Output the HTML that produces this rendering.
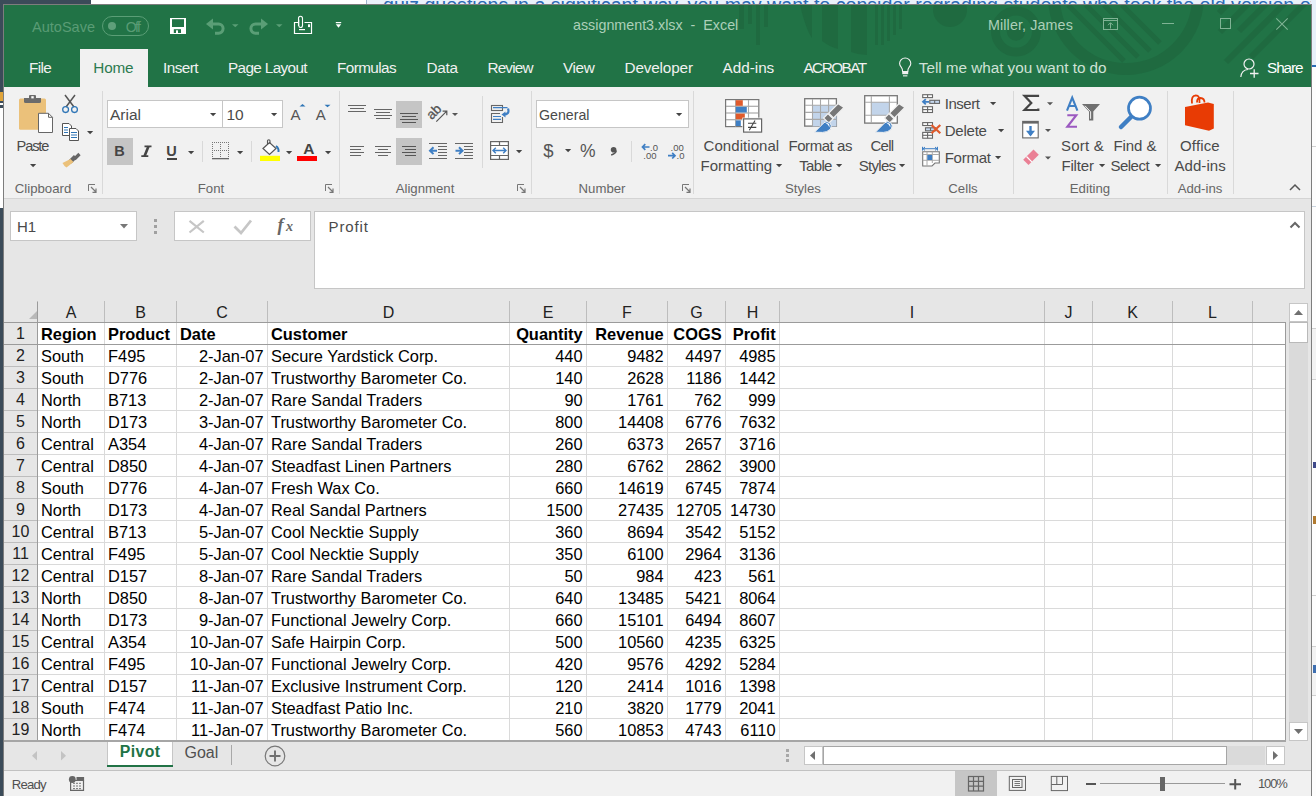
<!DOCTYPE html><html><head><meta charset="utf-8"><style>
*{margin:0;padding:0;box-sizing:border-box}
html,body{width:1316px;height:796px;overflow:hidden;background:#f0f0f0;font-family:"Liberation Sans",sans-serif}
.t{position:absolute;white-space:pre}
svg{overflow:visible}
</style></head><body>
<div style="position:absolute;left:0px;top:0px;width:1316px;height:796px;background:#eef2f7"></div>
<div style="position:absolute;left:0px;top:0px;width:91px;height:796px;background:#3b4b59"></div>
<div style="position:absolute;left:91px;top:0px;width:276px;height:5px;background:#ffffff"></div>
<div style="position:absolute;left:0px;top:92px;width:3px;height:9px;background:#e0a43a"></div>
<div style="position:absolute;left:0px;top:103px;width:3px;height:2px;background:#ffffff"></div>
<div style="position:absolute;left:0px;top:108px;width:3px;height:100px;background:#ffffff"></div>
<div style="position:absolute;left:367px;top:0px;width:949px;height:5px;background:#eaf1fa"></div>
<div style="position:absolute;left:366px;top:0px;width:1px;height:5px;background:#9fb4cc"></div>
<div style="position:absolute;left:367px;top:0;width:949px;height:5px;overflow:hidden"><div class="t" style="left:16px;top:-6px;font-size:19.6px;line-height:22px;color:#2c6bb5">quiz questions in a significant way, you may want to consider regrading students who took the old version of</div></div>
<div style="position:absolute;left:1311px;top:0px;width:5px;height:796px;background:#fdfdfd"></div>
<div style="position:absolute;left:1311px;top:0px;width:5px;height:65px;background:#e8f0fa"></div>
<div style="position:absolute;left:1311px;top:65px;width:5px;height:2px;background:#2c6bb5"></div>
<div style="position:absolute;left:1311px;top:146px;width:5px;height:1px;background:#d0d0d0"></div>
<div style="position:absolute;left:1311px;top:206px;width:5px;height:1px;background:#c9d3de"></div>
<div style="position:absolute;left:1311px;top:328px;width:5px;height:52px;background:#f3f3f3;border-top:1px solid #d0d0d0;border-bottom:1px solid #d0d0d0"></div>
<div style="position:absolute;left:1313px;top:462px;width:3px;height:6px;background:#404a8a"></div>
<div style="position:absolute;left:1313px;top:516px;width:3px;height:8px;background:#b07a30"></div>
<div style="position:absolute;left:1311px;top:595px;width:5px;height:1px;background:#d0d0d0"></div>
<div style="position:absolute;left:1311px;top:646px;width:5px;height:50px;background:#f3f3f3;border-top:1px solid #d0d0d0;border-bottom:1px solid #d0d0d0"></div>
<div style="position:absolute;left:1313px;top:665px;width:3px;height:8px;background:#3f6fb0"></div>
<div style="position:absolute;left:3px;top:4px;width:1309px;height:792px;background:#217346;border:1px solid #7d7d7d;border-bottom:none"></div>
<svg style="position:absolute;left:0;top:0" width="1312" height="87" viewBox="0 0 1312 87"><defs><clipPath id="tb"><rect x="4" y="5" width="1307" height="82"/></clipPath></defs><g clip-path="url(#tb)">
<g fill="#1f6a40">
<rect x="739" y="5" width="5" height="24"/>
<rect x="748" y="5" width="4" height="19"/>
<rect x="756" y="5" width="4" height="40"/>
<rect x="764" y="5" width="4" height="22"/>
<path d="M800 5 L812 5 L812 38 Q806 30 800 5Z"/>
<path d="M822 5 h16 v44 q-8 -2 -16 -8Z"/>
<path d="M851 5 h16 v50 q-8 0 -16 -3Z"/>
<rect x="875" y="5" width="3" height="40"/>
<rect x="881" y="5" width="3" height="40"/>
<rect x="887" y="5" width="3" height="36"/>
<rect x="893" y="5" width="3" height="30"/>
<rect x="899" y="5" width="3" height="24"/>
<circle cx="950" cy="10" r="17"/>
</g>
<g fill="none" stroke="#1f6a40">
<circle cx="1016" cy="31.6" r="20.5" stroke-width="9"/><circle cx="1016" cy="31.6" r="9.2" fill="#1f6a40" stroke="none"/>
<circle cx="1126" cy="-3" r="72" stroke-width="12"/>
<path d="M1068 5 L1124 61 M1086 5 L1138 57 M1104 5 L1150 51 M1122 5 L1160 43" stroke-width="5"/>
<path d="M1229 3 L1219 13 M1249 3 L1220 32 M1267 3 L1239 31 M1285 3 L1226 62 M1305 3 L1251 57" stroke-width="6"/>
</g></g></svg>
<div class="t " style="left:32.0px;top:18.64px;font-size:14.5px;line-height:16.67px;color:#5a9c75;letter-spacing:0.014px;">AutoSave</div>
<div style="position:absolute;left:102px;top:16px;width:47px;height:20px;border:1px solid #5a9e76;border-radius:10px"></div>
<div style="position:absolute;left:107.7px;top:21.8px;width:8.6px;height:8.6px;background:#5f9f7a;border-radius:50%"></div>
<div class="t " style="left:125.8px;top:19.10px;font-size:14px;line-height:16.10px;color:#5a9c75;letter-spacing:-1.600px;">Off</div>
<svg style="position:absolute;left:168px;top:16px;" width="20" height="20" viewBox="168 16 20 20"><rect x="170" y="18" width="16" height="16" fill="#fff"/><rect x="172" y="19.2" width="12" height="7.8" fill="#217346"/><rect x="173.8" y="29.2" width="7.2" height="3.8" fill="#217346"/><rect x="176" y="30.3" width="2" height="2.7" fill="#fff"/></svg>
<svg style="position:absolute;left:204px;top:16px;" width="40" height="20" viewBox="204 16 40 20"><path d="M206 24 L213 18.6 L213 29.4Z" fill="#5a9e76"/><path d="M212 24 H218.5 A4.6 4.6 0 0 1 218.5 33.2 H215" stroke="#5a9e76" stroke-width="3" fill="none"/><path d="M232 24.2 H238.5 L235.25 27.2Z" fill="#5a9e76"/></svg>
<svg style="position:absolute;left:248px;top:16px;" width="40" height="20" viewBox="248 16 40 20"><path d="M268 24 L261 18.6 L261 29.4Z" fill="#5a9e76"/><path d="M262 24 H255.5 A4.6 4.6 0 0 0 255.5 33.2 H259" stroke="#5a9e76" stroke-width="3" fill="none"/><path d="M276 24.2 H282.5 L279.25 27.2Z" fill="#5a9e76"/></svg>
<svg style="position:absolute;left:290px;top:14px;" width="26" height="22" viewBox="290 14 26 22"><path d="M298 22.5 H294.5 V33.5 H311.5 V22.5 H304.5" fill="none" stroke="#fff" stroke-width="1.2"/><path d="M298.5 26 V18.5 Q298.5 16.2 300.5 16.2 Q302.5 16.2 302.5 18.5 V25.5 Q302.5 27.5 300.5 27.5 Q298.8 27.5 298.8 25.5 V19.5" fill="none" stroke="#fff" stroke-width="1.1"/><rect x="299" y="29" width="6" height="1.2" fill="#fff"/><rect x="308" y="24.3" width="2" height="2.8" fill="#fff"/></svg>
<svg style="position:absolute;left:334px;top:20px;" width="10" height="10" viewBox="334 20 10 10"><rect x="335.8" y="22" width="5.4" height="1.2" fill="#fff"/><path d="M335.8 24.2 H341.2 L338.5 27.8Z" fill="#fff"/></svg>
<div class="t " style="left:573.0px;top:16.82px;font-size:14.3px;line-height:16.45px;color:#acd0b9;letter-spacing:-0.000px;">assignment3.xlsx  -  Excel</div>
<div class="t " style="left:988.0px;top:16.82px;font-size:14.3px;line-height:16.45px;color:#acd0b9;letter-spacing:0.117px;">Miller, James</div>
<svg style="position:absolute;left:1103px;top:18px;" width="15" height="12" viewBox="0 0 15 12"><rect x="0.5" y="0.5" width="14" height="11" fill="none" stroke="#7fb394" stroke-width="1"/><path d="M1 2.5 H14" stroke="#7fb394"/><path d="M7.5 10.5 V5 M5 7.2 L7.5 4.7 L10 7.2" fill="none" stroke="#7fb394"/></svg>
<div style="position:absolute;left:1162px;top:23px;width:12px;height:1px;background:#7fb394"></div>
<div style="position:absolute;left:1219.5px;top:18px;width:11px;height:11px;border:1px solid #7fb394"></div>
<svg style="position:absolute;left:1276px;top:18px;" width="12" height="12" viewBox="0 0 12 12"><path d="M0.3 0.3 L11.7 11.7 M11.7 0.3 L0.3 11.7" stroke="#7fb394" stroke-width="1.1"/></svg>
<div style="position:absolute;left:80px;top:49px;width:68px;height:38px;background:#f1f1f1"></div>
<div class="t " style="left:29.0px;top:58.90px;font-size:15.3px;line-height:17.59px;color:#f1f1f1;letter-spacing:-0.667px;">File</div>
<div class="t " style="left:93.3px;top:58.90px;font-size:15.3px;line-height:17.59px;color:#2d7b50;letter-spacing:-0.200px;">Home</div>
<div class="t " style="left:163.0px;top:58.90px;font-size:15.3px;line-height:17.59px;color:#f1f1f1;letter-spacing:-0.560px;">Insert</div>
<div class="t " style="left:228.0px;top:58.90px;font-size:15.3px;line-height:17.59px;color:#f1f1f1;letter-spacing:-0.630px;">Page Layout</div>
<div class="t " style="left:337.0px;top:58.90px;font-size:15.3px;line-height:17.59px;color:#f1f1f1;letter-spacing:-0.586px;">Formulas</div>
<div class="t " style="left:426.4px;top:58.90px;font-size:15.3px;line-height:17.59px;color:#f1f1f1;letter-spacing:-0.267px;">Data</div>
<div class="t " style="left:487.4px;top:58.90px;font-size:15.3px;line-height:17.59px;color:#f1f1f1;letter-spacing:-0.800px;">Review</div>
<div class="t " style="left:563.0px;top:58.90px;font-size:15.3px;line-height:17.59px;color:#f1f1f1;letter-spacing:-0.400px;">View</div>
<div class="t " style="left:624.5px;top:58.90px;font-size:15.3px;line-height:17.59px;color:#f1f1f1;letter-spacing:-0.150px;">Developer</div>
<div class="t " style="left:722.5px;top:58.90px;font-size:15.3px;line-height:17.59px;color:#f1f1f1;letter-spacing:-0.017px;">Add-ins</div>
<div class="t " style="left:803.4px;top:58.90px;font-size:15.3px;line-height:17.59px;color:#f1f1f1;letter-spacing:-1.500px;">ACROBAT</div>
<svg style="position:absolute;left:896px;top:55px;" width="20" height="24" viewBox="896 55 20 24"><path d="M902.6 71.5 Q902.6 69 901.2 67.2 Q899.6 65.2 899.6 63.6 A5.6 5.6 0 0 1 910.8 63.6 Q910.8 65.2 909.2 67.2 Q907.8 69 907.8 71.5Z" fill="none" stroke="#f1f1f1" stroke-width="1.1"/><rect x="902.2" y="71.4" width="6" height="2.8" fill="#f1f1f1"/><rect x="903" y="75.3" width="4.4" height="1.1" fill="#f1f1f1"/></svg>
<div class="t " style="left:918.8px;top:58.90px;font-size:15.3px;line-height:17.59px;color:#cfe2d6;letter-spacing:-0.038px;">Tell me what you want to do</div>
<svg style="position:absolute;left:1240px;top:58px;" width="19" height="20" viewBox="0 0 19 20"><circle cx="9" cy="6" r="5" fill="none" stroke="#f1f1f1" stroke-width="1.2"/><path d="M0.8 19 Q1.5 12 8 11.5" fill="none" stroke="#f1f1f1" stroke-width="1.2"/><path d="M10 15.5 H18.5 M14.2 11.3 V19.8" stroke="#f1f1f1" stroke-width="1.3"/></svg>
<div class="t " style="left:1267.0px;top:58.90px;font-size:15.3px;line-height:17.59px;color:#ffffff;letter-spacing:-1.075px;">Share</div>
<div style="position:absolute;left:4px;top:87px;width:1307px;height:111px;background:#f1f1f1"></div>
<div style="position:absolute;left:4px;top:198px;width:1307px;height:1px;background:#d4d4d4"></div>
<div style="position:absolute;left:4px;top:199px;width:1307px;height:597px;background:#e6e6e6"></div>
<svg style="position:absolute;left:14px;top:92px;" width="44" height="44" viewBox="14 92 44 44"><rect x="19" y="98.5" width="27" height="31.2" rx="1.5" fill="#ebc17a"/>
<path d="M24 98 H41 V101.5 Q41 103 39.5 103 H25.5 Q24 103 24 101.5Z" fill="#6b6b6b"/><rect x="29" y="95" width="7" height="4" rx="1" fill="#6b6b6b"/><rect x="31.3" y="96.2" width="2.4" height="2.2" fill="#fff"/>
<path d="M38.5 113.3 H48.5 L52.5 117.3 V132.5 H38.5Z" fill="#fff" stroke="#666" stroke-width="1"/><path d="M48.5 113.3 V117.3 H52.5" fill="none" stroke="#666" stroke-width="1"/></svg>
<div class="t " style="left:16.6px;top:137.55px;font-size:14.6px;line-height:16.79px;color:#4a4a4a;letter-spacing:-1.125px;">Paste</div>
<svg style="position:absolute;left:29.5px;top:163.5px;" width="7" height="4" viewBox="0 0 7 4"><path d="M0 0 H6.2 L3.1 3.3Z" fill="#444"/></svg>
<svg style="position:absolute;left:60px;top:92px;" width="20" height="24" viewBox="60 92 20 24"><path d="M65 95 L74 107 M75 95 L66 107" stroke="#555" stroke-width="1.5"/><circle cx="65.6" cy="109.6" r="2.9" fill="none" stroke="#2e75b6" stroke-width="1.3"/><circle cx="74.5" cy="109.6" r="2.9" fill="none" stroke="#2e75b6" stroke-width="1.3"/></svg>
<svg style="position:absolute;left:60px;top:120px;" width="22" height="24" viewBox="60 120 22 24"><path d="M62.5 123.5 H69 L71.5 126 V135.5 H62.5Z" fill="#fff" stroke="#555" stroke-width="1"/><path d="M64 127.5 H68 M64 130 H68 M64 132.5 H68" stroke="#2e75b6" stroke-width="1"/><path d="M69.5 128.5 H76 L78.5 131 V140.5 H69.5Z" fill="#fff" stroke="#555" stroke-width="1"/><path d="M71 132.5 H77 M71 135 H77 M71 137.5 H77" stroke="#2e75b6" stroke-width="1"/></svg>
<svg style="position:absolute;left:87px;top:130.7px;" width="7" height="4" viewBox="0 0 7 4"><path d="M0 0 H6.2 L3.1 3.3Z" fill="#444"/></svg>
<svg style="position:absolute;left:60px;top:150px;" width="22" height="20" viewBox="60 150 22 20"><path d="M79.5 154 L74.5 159" stroke="#666" stroke-width="3.2"/><path d="M75.5 156.5 L70 162" stroke="#666" stroke-width="4.5"/><path d="M70.5 159 L62.5 163 Q64 166 66.5 167.5 L73.5 162Z" fill="#ebc17a"/></svg>
<div class="t " style="left:-157px;width:400px;text-align:center;top:180.84px;font-size:13.2px;line-height:15.18px;color:#666666;">Clipboard</div>
<svg style="position:absolute;left:88px;top:184px;" width="9" height="9" viewBox="0 0 9 9"><path d="M0.5 7 V0.5 H7" fill="none" stroke="#777" stroke-width="1"/><path d="M3 3 L8 8 M8 4.5 V8.3 H4.5" fill="none" stroke="#777" stroke-width="1.2"/></svg>
<div style="position:absolute;left:102px;top:91px;width:1px;height:103px;background:#d9d9d9"></div>
<div style="position:absolute;left:107px;top:100px;width:116px;height:28px;background:#fff;border:1px solid #c6c6c6"></div>
<div style="position:absolute;left:222px;top:100px;width:61px;height:28px;background:#fff;border:1px solid #c6c6c6"></div>
<div class="t " style="left:110px;top:105.72px;font-size:15.5px;line-height:17.82px;color:#4a4a4a;">Arial</div>
<div class="t " style="left:226.5px;top:105.72px;font-size:15.5px;line-height:17.82px;color:#4a4a4a;">10</div>
<svg style="position:absolute;left:210px;top:113px;" width="7" height="4" viewBox="0 0 7 4"><path d="M0 0 H6.2 L3.1 3.3Z" fill="#444"/></svg>
<svg style="position:absolute;left:271px;top:113px;" width="7" height="4" viewBox="0 0 7 4"><path d="M0 0 H6.2 L3.1 3.3Z" fill="#444"/></svg>
<div class="t " style="left:290.5px;top:105.68px;font-size:15px;line-height:17.25px;color:#555;">A</div>
<svg style="position:absolute;left:298px;top:103px;" width="8" height="5" viewBox="298 103 8 5"><path d="M299.5 106.6 L302.5 104 L305.5 106.6Z" fill="#2e75b6"/></svg>
<div class="t " style="left:315.8px;top:105.68px;font-size:15px;line-height:17.25px;color:#555;">A</div>
<svg style="position:absolute;left:322px;top:103px;" width="10" height="5" viewBox="322 103 10 5"><path d="M324.5 104.8 L330.5 104.8 L327.5 107.2Z" fill="#2e75b6"/></svg>
<div style="position:absolute;left:107px;top:138px;width:26px;height:27px;background:#c5c5c5"></div>
<div class="t " style="left:114.3px;top:143.34px;font-size:14.5px;line-height:16.67px;color:#444;font-weight:bold;">B</div>
<svg style="position:absolute;left:138px;top:142px;" width="16" height="18" viewBox="138 142 16 18"><path d="M144.5 146.3 H151.5 M141.3 156.2 H148.3" stroke="#444" stroke-width="1.8"/><path d="M148.5 146.3 L144.5 156.2" stroke="#444" stroke-width="2.6"/></svg>
<div class="t " style="left:166.3px;top:143.14px;font-size:14.5px;line-height:16.67px;color:#444;font-weight:bold;">U</div>
<div style="position:absolute;left:166.5px;top:158px;width:10.5px;height:1.5px;background:#444"></div>
<svg style="position:absolute;left:188px;top:150.5px;" width="7" height="4" viewBox="0 0 7 4"><path d="M0 0 H6.2 L3.1 3.3Z" fill="#444"/></svg>
<div style="position:absolute;left:202px;top:141px;width:1px;height:21px;background:#d9d9d9"></div>
<svg style="position:absolute;left:210px;top:140px;" width="22" height="22" viewBox="210 140 22 22"><rect x="212" y="142" width="1" height="1" fill="#777"/><rect x="212" y="150" width="1" height="1" fill="#777"/><rect x="214" y="142" width="1" height="1" fill="#777"/><rect x="214" y="150" width="1" height="1" fill="#777"/><rect x="216" y="142" width="1" height="1" fill="#777"/><rect x="216" y="150" width="1" height="1" fill="#777"/><rect x="218" y="142" width="1" height="1" fill="#777"/><rect x="218" y="150" width="1" height="1" fill="#777"/><rect x="220" y="142" width="1" height="1" fill="#777"/><rect x="220" y="150" width="1" height="1" fill="#777"/><rect x="222" y="142" width="1" height="1" fill="#777"/><rect x="222" y="150" width="1" height="1" fill="#777"/><rect x="224" y="142" width="1" height="1" fill="#777"/><rect x="224" y="150" width="1" height="1" fill="#777"/><rect x="226" y="142" width="1" height="1" fill="#777"/><rect x="226" y="150" width="1" height="1" fill="#777"/><rect x="228" y="142" width="1" height="1" fill="#777"/><rect x="228" y="150" width="1" height="1" fill="#777"/><rect x="212" y="142" width="1" height="1" fill="#777"/><rect x="212" y="144" width="1" height="1" fill="#777"/><rect x="212" y="146" width="1" height="1" fill="#777"/><rect x="212" y="148" width="1" height="1" fill="#777"/><rect x="212" y="150" width="1" height="1" fill="#777"/><rect x="212" y="152" width="1" height="1" fill="#777"/><rect x="212" y="154" width="1" height="1" fill="#777"/><rect x="212" y="156" width="1" height="1" fill="#777"/><rect x="220" y="142" width="1" height="1" fill="#777"/><rect x="220" y="144" width="1" height="1" fill="#777"/><rect x="220" y="146" width="1" height="1" fill="#777"/><rect x="220" y="148" width="1" height="1" fill="#777"/><rect x="220" y="150" width="1" height="1" fill="#777"/><rect x="220" y="152" width="1" height="1" fill="#777"/><rect x="220" y="154" width="1" height="1" fill="#777"/><rect x="220" y="156" width="1" height="1" fill="#777"/><rect x="228" y="142" width="1" height="1" fill="#777"/><rect x="228" y="144" width="1" height="1" fill="#777"/><rect x="228" y="146" width="1" height="1" fill="#777"/><rect x="228" y="148" width="1" height="1" fill="#777"/><rect x="228" y="150" width="1" height="1" fill="#777"/><rect x="228" y="152" width="1" height="1" fill="#777"/><rect x="228" y="154" width="1" height="1" fill="#777"/><rect x="228" y="156" width="1" height="1" fill="#777"/><rect x="212" y="158" width="17" height="1.3" fill="#666"/></svg>
<svg style="position:absolute;left:237px;top:150.5px;" width="7" height="4" viewBox="0 0 7 4"><path d="M0 0 H6.2 L3.1 3.3Z" fill="#444"/></svg>
<div style="position:absolute;left:251px;top:141px;width:1px;height:21px;background:#d9d9d9"></div>
<svg style="position:absolute;left:258px;top:138px;" width="26" height="26" viewBox="258 138 26 26"><path d="M263 148.5 L269.5 142.5 L276 148.5 L269.5 154.5Z" fill="#fff" stroke="#555" stroke-width="1.2"/><path d="M267.5 144.5 V140.8 Q267.5 139.8 268.8 139.8 Q270 139.8 270 140.8 V144" fill="none" stroke="#555" stroke-width="1.1"/><path d="M276 146 Q279 148 278.5 152" fill="none" stroke="#2e75b6" stroke-width="2"/><rect x="260" y="155.8" width="20" height="5.2" fill="#ffff00"/></svg>
<svg style="position:absolute;left:286px;top:150.5px;" width="7" height="4" viewBox="0 0 7 4"><path d="M0 0 H6.2 L3.1 3.3Z" fill="#444"/></svg>
<div class="t " style="left:108.80000000000001px;width:400px;text-align:center;top:139.72px;font-size:15.5px;line-height:17.82px;color:#444;font-weight:bold;">A</div>
<div style="position:absolute;left:297px;top:155.8px;width:20px;height:5.2px;background:#ff0000"></div>
<svg style="position:absolute;left:325px;top:150.5px;" width="7" height="4" viewBox="0 0 7 4"><path d="M0 0 H6.2 L3.1 3.3Z" fill="#444"/></svg>
<div class="t " style="left:11px;width:400px;text-align:center;top:180.84px;font-size:13.2px;line-height:15.18px;color:#666666;">Font</div>
<svg style="position:absolute;left:325px;top:184px;" width="9" height="9" viewBox="0 0 9 9"><path d="M0.5 7 V0.5 H7" fill="none" stroke="#777" stroke-width="1"/><path d="M3 3 L8 8 M8 4.5 V8.3 H4.5" fill="none" stroke="#777" stroke-width="1.2"/></svg>
<div style="position:absolute;left:339px;top:91px;width:1px;height:103px;background:#d9d9d9"></div>
<svg style="position:absolute;left:340px;top:96px;" width="140" height="72" viewBox="340 96 140 72"><rect x="348" y="105" width="18" height="1" fill="#666"/><rect x="350" y="108" width="14" height="1" fill="#666"/><rect x="348" y="111" width="18" height="1" fill="#666"/><rect x="374" y="109" width="18" height="1" fill="#666"/><rect x="376" y="112" width="14" height="1" fill="#666"/><rect x="374" y="115" width="18" height="1" fill="#666"/><rect x="376" y="118" width="14" height="1" fill="#666"/><rect x="396" y="101" width="26" height="27" fill="#c5c5c5"/><rect x="400" y="113" width="18" height="1" fill="#555"/><rect x="402" y="116" width="14" height="1" fill="#555"/><rect x="400" y="119" width="18" height="1" fill="#555"/><rect x="402" y="122" width="14" height="1" fill="#555"/><text x="0" y="0" font-size="13.5" font-family="Liberation Sans" fill="#555" stroke="#555" stroke-width="0.3" transform="translate(431.8,120.3) rotate(-45)">ab</text><path d="M436.3 121.6 L446.5 111.4 M442.6 111.2 H446.8 V115.2" fill="none" stroke="#555" stroke-width="1.2"/><path d="M452 113 H458 L455 116Z" fill="#555"/><rect x="350" y="146" width="14" height="1" fill="#666"/><rect x="350" y="149" width="11" height="1" fill="#666"/><rect x="350" y="152" width="14" height="1" fill="#666"/><rect x="350" y="155" width="11" height="1" fill="#666"/><rect x="375" y="146" width="16" height="1" fill="#666"/><rect x="378" y="149" width="10" height="1" fill="#666"/><rect x="375" y="152" width="16" height="1" fill="#666"/><rect x="378" y="155" width="10" height="1" fill="#666"/><rect x="396" y="138" width="26" height="27" fill="#c5c5c5"/><rect x="402" y="146" width="14" height="1" fill="#555"/><rect x="405" y="149" width="11" height="1" fill="#555"/><rect x="402" y="152" width="14" height="1" fill="#555"/><rect x="405" y="155" width="11" height="1" fill="#555"/><rect x="429" y="143" width="18" height="1" fill="#666"/><rect x="438" y="146" width="9" height="1" fill="#666"/><rect x="438" y="149" width="9" height="1" fill="#666"/><rect x="438" y="152" width="9" height="1" fill="#666"/><rect x="438" y="155" width="9" height="1" fill="#666"/><rect x="429" y="158" width="18" height="1" fill="#666"/><path d="M433.5 147.3 L430 150.7 L433.5 154.1 M430.5 150.7 H437" fill="none" stroke="#3f7fc4" stroke-width="2"/><rect x="455" y="143" width="18" height="1" fill="#666"/><rect x="464" y="146" width="9" height="1" fill="#666"/><rect x="464" y="149" width="9" height="1" fill="#666"/><rect x="464" y="152" width="9" height="1" fill="#666"/><rect x="464" y="155" width="9" height="1" fill="#666"/><rect x="455" y="158" width="18" height="1" fill="#666"/><path d="M459 147.3 L462.5 150.7 L459 154.1 M462 150.7 H455.5" fill="none" stroke="#3f7fc4" stroke-width="2"/></svg>
<div style="position:absolute;left:482px;top:96px;width:1px;height:72px;background:#d9d9d9"></div>
<svg style="position:absolute;left:486px;top:100px;" width="28" height="28" viewBox="486 100 28 28"><rect x="491.5" y="105.5" width="11" height="5" fill="none" stroke="#666" stroke-width="1.1"/><path d="M500 113.5 H491.5 V122.5 H502.5 V117" fill="none" stroke="#666" stroke-width="1.1"/><path d="M493 107.6 H507.5 M493 116.5 H501 M493 119.4 H501" stroke="#3f7fc4" stroke-width="1.1"/><path d="M508 108.5 Q510 114.5 503.5 114.5" fill="none" stroke="#3f7fc4" stroke-width="2.2"/><path d="M501.5 114.5 L505.5 111.5 V117.5Z" fill="#3f7fc4"/></svg>
<svg style="position:absolute;left:486px;top:138px;" width="28" height="24" viewBox="486 138 28 24"><rect x="490.6" y="141.6" width="17.8" height="17.8" fill="#fff" stroke="#666" stroke-width="1.2"/><path d="M490.6 145.5 H508.4 M490.6 155.5 H508.4 M499.5 141.6 V145.5 M499.5 155.5 V159.4" stroke="#666" stroke-width="1.2"/><path d="M493 150.5 H506 M495.8 147.7 L493 150.5 L495.8 153.3 M503.2 147.7 L506 150.5 L503.2 153.3" fill="none" stroke="#3f7fc4" stroke-width="1.4"/></svg>
<svg style="position:absolute;left:516px;top:149.8px;" width="7" height="4" viewBox="0 0 7 4"><path d="M0 0 H6.2 L3.1 3.3Z" fill="#444"/></svg>
<div class="t " style="left:225px;width:400px;text-align:center;top:180.84px;font-size:13.2px;line-height:15.18px;color:#666666;">Alignment</div>
<svg style="position:absolute;left:517px;top:184px;" width="9" height="9" viewBox="0 0 9 9"><path d="M0.5 7 V0.5 H7" fill="none" stroke="#777" stroke-width="1"/><path d="M3 3 L8 8 M8 4.5 V8.3 H4.5" fill="none" stroke="#777" stroke-width="1.2"/></svg>
<div style="position:absolute;left:531px;top:91px;width:1px;height:103px;background:#d9d9d9"></div>
<div style="position:absolute;left:536px;top:100px;width:153px;height:28px;background:#fff;border:1px solid #c6c6c6"></div>
<div class="t " style="left:539px;top:106.91px;font-size:14.2px;line-height:16.33px;color:#4a4a4a;">General</div>
<svg style="position:absolute;left:676px;top:113px;" width="7" height="4" viewBox="0 0 7 4"><path d="M0 0 H6.2 L3.1 3.3Z" fill="#444"/></svg>
<div class="t " style="left:543.2px;top:139.95px;font-size:18.5px;line-height:21.27px;color:#555;">$</div>
<svg style="position:absolute;left:565px;top:149.3px;" width="7" height="4" viewBox="0 0 7 4"><path d="M0 0 H6.2 L3.1 3.3Z" fill="#444"/></svg>
<div class="t " style="left:580px;top:141.47px;font-size:17.5px;line-height:20.12px;color:#555;">%</div>
<svg style="position:absolute;left:606px;top:144px;" width="14" height="14" viewBox="606 144 14 14"><circle cx="613.6" cy="149.8" r="2.8" fill="#555"/><path d="M616.2 150.5 Q616 153.5 611.2 155" fill="none" stroke="#555" stroke-width="1.6"/></svg>
<div style="position:absolute;left:631px;top:141px;width:1px;height:21px;background:#d9d9d9"></div>
<svg style="position:absolute;left:638px;top:140px;" width="50" height="22" viewBox="638 140 50 22"><text x="650" y="150.8" font-size="9.5" font-family="Liberation Sans" fill="#555">.0</text><text x="643.3" y="159.4" font-size="9.5" font-family="Liberation Sans" fill="#555">.00</text><path d="M642.5 147 H649.5 M645.3 144.2 L642.5 147 L645.3 149.8" stroke="#3f7fc4" stroke-width="1.7" fill="none"/><text x="670.5" y="150.8" font-size="9.5" font-family="Liberation Sans" fill="#555">.00</text><text x="676.5" y="159.4" font-size="9.5" font-family="Liberation Sans" fill="#555">.0</text><path d="M668 155.7 H675 M672.2 152.9 L675 155.7 L672.2 158.5" stroke="#3f7fc4" stroke-width="1.7" fill="none"/></svg>
<div class="t " style="left:402px;width:400px;text-align:center;top:180.84px;font-size:13.2px;line-height:15.18px;color:#666666;">Number</div>
<svg style="position:absolute;left:682px;top:184px;" width="9" height="9" viewBox="0 0 9 9"><path d="M0.5 7 V0.5 H7" fill="none" stroke="#777" stroke-width="1"/><path d="M3 3 L8 8 M8 4.5 V8.3 H4.5" fill="none" stroke="#777" stroke-width="1.2"/></svg>
<div style="position:absolute;left:693px;top:91px;width:1px;height:103px;background:#d9d9d9"></div>
<svg style="position:absolute;left:720px;top:94px;" width="46" height="42" viewBox="720 94 46 42"><rect x="725.6" y="99.6" width="33.2" height="27" fill="#fff" stroke="#777" stroke-width="1.2"/><path d="M726 106.3 H758.5 M726 113 H758.5 M726 119.8 H758.5" stroke="#999" stroke-width="1.1"/><path d="M735.6 100 V126.4 M748.5 100 V126.4" stroke="#aaa" stroke-width="1.1"/><rect x="735.8" y="100.2" width="7" height="5.6" fill="#e05a2b"/><rect x="735.8" y="106.9" width="11" height="5.6" fill="#3f7fc4"/><rect x="735.8" y="113.6" width="9" height="5.6" fill="#e05a2b"/><rect x="735.8" y="120.4" width="5" height="5.6" fill="#3f7fc4"/><rect x="742.3" y="117.6" width="20.6" height="15.6" fill="#f1f1f1"/><rect x="743.6" y="118.9" width="18" height="13.2" fill="#fff" stroke="#666" stroke-width="1.2"/><path d="M748 123.3 H756.3 M748 127.4 H756.3 M755 120.5 L749.3 130.3" stroke="#444" stroke-width="1.1"/></svg>
<div class="t " style="left:703.6px;top:137.18px;font-size:15px;line-height:17.25px;color:#4a4a4a;letter-spacing:0.050px;">Conditional</div>
<div class="t " style="left:700.5px;top:157.18px;font-size:15px;line-height:17.25px;color:#4a4a4a;letter-spacing:0.000px;">Formatting</div>
<svg style="position:absolute;left:776px;top:164px;" width="7" height="4" viewBox="0 0 7 4"><path d="M0 0 H6.2 L3.1 3.3Z" fill="#444"/></svg>
<svg style="position:absolute;left:800px;top:94px;" width="50" height="42" viewBox="800 94 50 42"><rect x="804.7" y="98.7" width="31.7" height="27.4" fill="#fff" stroke="#777" stroke-width="1.3"/><rect x="812.5" y="105.3" width="24" height="21" fill="#c2d4ea"/><path d="M812.5 99 V126 M820.5 99 V126 M828.6 99 V126 M805 105.3 H836 M805 112.4 H836 M805 119.4 H836" stroke="#a8a8a8" stroke-width="1.1"/><g transform="translate(814.5,132.2)"><g transform="rotate(-45)"><rect x="16.5" y="-3.6" width="6.2" height="7.2" fill="#777" stroke="#f1f1f1" stroke-width="1.2"/><path d="M23.5 -3.4 H37 L38.3 3.4 H23.5Z" fill="#777" stroke="#f1f1f1" stroke-width="1.2"/></g><path d="M0 0 L9.5 -9.5 Q12.5 -11.8 15.5 -9.3 Q18 -6.5 15.8 -3 Q12.5 0.2 8 0.2 Z" fill="#3f7fc4" stroke="#f1f1f1" stroke-width="1"/><path d="M11.2 -9.2 Q15.5 -9.8 15 -4.8 Q13.8 -7.8 11.2 -9.2Z" fill="#fff"/></g></svg>
<div class="t " style="left:788.5px;top:137.18px;font-size:15px;line-height:17.25px;color:#4a4a4a;letter-spacing:-0.450px;">Format as</div>
<div class="t " style="left:799.3px;top:157.18px;font-size:15px;line-height:17.25px;color:#4a4a4a;letter-spacing:-0.675px;">Table</div>
<svg style="position:absolute;left:836px;top:164px;" width="7" height="4" viewBox="0 0 7 4"><path d="M0 0 H6.2 L3.1 3.3Z" fill="#444"/></svg>
<svg style="position:absolute;left:860px;top:92px;" width="50" height="44" viewBox="860 92 50 44"><rect x="864.7" y="95.7" width="32.6" height="27.4" fill="#fff" stroke="#777" stroke-width="1.3"/><rect x="871.3" y="102.3" width="18.1" height="13" fill="#c2d4ea"/><path d="M871.3 96 V123 M889.4 96 V123 M865 102.3 H897 M865 115.3 H897" stroke="#a8a8a8" stroke-width="1.1"/><g transform="translate(875.4,132.2)"><g transform="rotate(-45)"><rect x="16.5" y="-3.6" width="6.2" height="7.2" fill="#777" stroke="#f1f1f1" stroke-width="1.2"/><path d="M23.5 -3.4 H37 L38.3 3.4 H23.5Z" fill="#777" stroke="#f1f1f1" stroke-width="1.2"/></g><path d="M0 0 L9.5 -9.5 Q12.5 -11.8 15.5 -9.3 Q18 -6.5 15.8 -3 Q12.5 0.2 8 0.2 Z" fill="#3f7fc4" stroke="#f1f1f1" stroke-width="1"/><path d="M11.2 -9.2 Q15.5 -9.8 15 -4.8 Q13.8 -7.8 11.2 -9.2Z" fill="#fff"/></g></svg>
<div class="t " style="left:870.5px;top:137.18px;font-size:15px;line-height:17.25px;color:#4a4a4a;letter-spacing:-0.767px;">Cell</div>
<div class="t " style="left:858.7px;top:157.18px;font-size:15px;line-height:17.25px;color:#4a4a4a;letter-spacing:-0.700px;">Styles</div>
<svg style="position:absolute;left:899px;top:164px;" width="7" height="4" viewBox="0 0 7 4"><path d="M0 0 H6.2 L3.1 3.3Z" fill="#444"/></svg>
<div class="t " style="left:603px;width:400px;text-align:center;top:180.84px;font-size:13.2px;line-height:15.18px;color:#666666;">Styles</div>
<div style="position:absolute;left:913px;top:91px;width:1px;height:103px;background:#d9d9d9"></div>
<svg style="position:absolute;left:918px;top:90px;" width="26" height="26" viewBox="918 90 26 26"><rect x="922.7" y="94.7" width="9.799999999999955" height="2.8999999999999915" fill="#fff" stroke="#666" stroke-width="1.1"/><path d="M927.6 94.7 V97.6" stroke="#666" stroke-width="1.1"/><rect x="929.8" y="100.3" width="9.700000000000045" height="3.1000000000000085" fill="#c5d8ef" stroke="#666" stroke-width="1.1"/><path d="M934.65 100.3 V103.4" stroke="#666" stroke-width="1.1"/><rect x="922.7" y="106.7" width="9.799999999999955" height="5.799999999999997" fill="#fff" stroke="#666" stroke-width="1.1"/><path d="M927.6 106.7 V112.5" stroke="#666" stroke-width="1.1"/><path d="M922.7 109.6 H932.5" stroke="#666" stroke-width="1.1"/><path d="M923 101.8 H929 M925.8 99.2 L923 101.8 L925.8 104.4" fill="none" stroke="#3f7fc4" stroke-width="1.8"/></svg>
<div class="t " style="left:944.7px;top:95.18px;font-size:15px;line-height:17.25px;color:#4a4a4a;letter-spacing:-0.460px;">Insert</div>
<svg style="position:absolute;left:989.5px;top:102px;" width="7" height="4" viewBox="0 0 7 4"><path d="M0 0 H6.2 L3.1 3.3Z" fill="#444"/></svg>
<svg style="position:absolute;left:918px;top:118px;" width="26" height="24" viewBox="918 118 26 24"><rect x="922.7" y="122.6" width="9.799999999999955" height="2.9000000000000057" fill="#fff" stroke="#666" stroke-width="1.1"/><path d="M927.6 122.6 V125.5" stroke="#666" stroke-width="1.1"/><rect x="925.5" y="127.8" width="10.0" height="3.000000000000014" fill="#c5d8ef" stroke="#666" stroke-width="1.1"/><path d="M930.5 127.8 V130.8" stroke="#666" stroke-width="1.1"/><rect x="922.7" y="132.4" width="9.799999999999955" height="5.799999999999983" fill="#fff" stroke="#666" stroke-width="1.1"/><path d="M927.6 132.4 V138.2" stroke="#666" stroke-width="1.1"/><path d="M922.7 135.3 H932.5" stroke="#666" stroke-width="1.1"/><path d="M931.5 125 L940.3 133.3 M940.3 125 L931.5 133.3" stroke="#e05a2b" stroke-width="2.2"/></svg>
<div class="t " style="left:944.7px;top:122.18px;font-size:15px;line-height:17.25px;color:#4a4a4a;letter-spacing:-0.220px;">Delete</div>
<svg style="position:absolute;left:997.5px;top:129px;" width="7" height="4" viewBox="0 0 7 4"><path d="M0 0 H6.2 L3.1 3.3Z" fill="#444"/></svg>
<svg style="position:absolute;left:918px;top:144px;" width="26" height="26" viewBox="918 144 26 26"><path d="M922.5 148.7 H937.5 M922.5 146.8 V150.6 M937.5 146.8 V150.6 M925 147 L923 148.7 L925 150.4 M935 147 L937 148.7 L935 150.4" fill="none" stroke="#3f7fc4" stroke-width="1"/><path d="M922.7 151.7 H939.3 V163 H935 L932 166 H922.7Z" fill="#fff" stroke="#777" stroke-width="1.1"/><path d="M922.7 154.5 H939.3 M922.7 160.3 H939.3 M927 151.7 V166 M932.3 151.7 V163" stroke="#aaa" stroke-width="1"/><rect x="927.3" y="155" width="4.8" height="5" fill="#3f7fc4"/></svg>
<div class="t " style="left:944.7px;top:149.18px;font-size:15px;line-height:17.25px;color:#4a4a4a;letter-spacing:-0.240px;">Format</div>
<svg style="position:absolute;left:995px;top:156.2px;" width="7" height="4" viewBox="0 0 7 4"><path d="M0 0 H6.2 L3.1 3.3Z" fill="#444"/></svg>
<div class="t " style="left:763px;width:400px;text-align:center;top:180.84px;font-size:13.2px;line-height:15.18px;color:#666666;">Cells</div>
<div style="position:absolute;left:1013px;top:91px;width:1px;height:103px;background:#d9d9d9"></div>
<svg style="position:absolute;left:1018px;top:90px;" width="40" height="78" viewBox="1018 90 40 78"><path d="M1038 97 V95.8 H1024.5 L1031.3 102.9 L1024.5 110 H1038.3 V108.6" fill="none" stroke="#444" stroke-width="2.2" stroke-linejoin="miter"/><path d="M1047 102.2 H1053 L1050 105.2Z" fill="#555"/><rect x="1022.7" y="121.4" width="15.5" height="16.5" fill="#fff" stroke="#666" stroke-width="1.1"/><rect x="1022.7" y="121.4" width="15.5" height="2.2" fill="#666"/><path d="M1030.5 126 V135" stroke="#3f7fc4" stroke-width="2.4"/><path d="M1026 130.8 L1030.5 136.5 L1035 130.8Z" fill="#3f7fc4"/><path d="M1045 129 H1051 L1048 132Z" fill="#555"/><path d="M1033.5 149.5 L1038.8 154.8 L1028.5 165 L1023.2 159.7Z" fill="#ea8095"/><path d="M1026.5 156.5 L1031.8 161.8" stroke="#fff" stroke-width="1.2"/><path d="M1045 156.4 H1051 L1048 159.4Z" fill="#555"/></svg>
<svg style="position:absolute;left:1062px;top:94px;" width="42" height="30" viewBox="1062 94 42 30"><path d="M1067 110.6 L1072.2 97.5 L1077.4 110.6 M1068.8 106 H1075.6" fill="none" stroke="#3f7fc4" stroke-width="2.1"/><path d="M1067.3 115.2 H1076.3 L1067.3 126.8 H1077" fill="none" stroke="#9b59c0" stroke-width="2.1"/><path d="M1082 104 H1100 L1093.3 111.5 V120.4 H1089 V111.5Z" fill="#707070"/><path d="M1085 105.8 L1090.6 111.8 V118.8" fill="none" stroke="#fff" stroke-width="0.9"/></svg>
<div class="t " style="left:1061.0px;top:137.18px;font-size:15px;line-height:17.25px;color:#4a4a4a;letter-spacing:0.200px;">Sort &</div>
<div class="t " style="left:1061.4px;top:157.18px;font-size:15px;line-height:17.25px;color:#4a4a4a;letter-spacing:-0.140px;">Filter</div>
<svg style="position:absolute;left:1098.5px;top:164px;" width="7" height="4" viewBox="0 0 7 4"><path d="M0 0 H6.2 L3.1 3.3Z" fill="#444"/></svg>
<svg style="position:absolute;left:1114px;top:92px;" width="40" height="40" viewBox="1114 92 40 40"><circle cx="1139.5" cy="108.2" r="11" fill="#fff" stroke="#3f7fc4" stroke-width="2.7"/><path d="M1131 117 L1121 127" stroke="#3f7fc4" stroke-width="4.5" stroke-linecap="round"/></svg>
<div class="t " style="left:1113.4px;top:137.18px;font-size:15px;line-height:17.25px;color:#4a4a4a;letter-spacing:-0.040px;">Find &</div>
<div class="t " style="left:1110.4px;top:157.18px;font-size:15px;line-height:17.25px;color:#4a4a4a;letter-spacing:-0.500px;">Select</div>
<svg style="position:absolute;left:1154.5px;top:164px;" width="7" height="4" viewBox="0 0 7 4"><path d="M0 0 H6.2 L3.1 3.3Z" fill="#444"/></svg>
<div class="t " style="left:890px;width:400px;text-align:center;top:180.84px;font-size:13.2px;line-height:15.18px;color:#666666;">Editing</div>
<div style="position:absolute;left:1167px;top:91px;width:1px;height:103px;background:#d9d9d9"></div>
<svg style="position:absolute;left:1182px;top:92px;" width="36" height="42" viewBox="1182 92 36 42"><path d="M1185 107 L1208 102.4 L1213.8 104 V128.5 L1209 130.7 L1185 125.3Z" fill="#e83b04"/><path d="M1192 103.5 Q1191 95.5 1195.8 95.3 Q1200 95.3 1199.5 103" fill="none" stroke="#e83b04" stroke-width="1.8"/><path d="M1197 102.5 Q1197 98 1200.5 98 Q1204.5 98.2 1204.5 102.5" fill="none" stroke="#e83b04" stroke-width="1.8"/></svg>
<div class="t " style="left:1180.0px;top:137.18px;font-size:15px;line-height:17.25px;color:#4a4a4a;letter-spacing:0.160px;">Office</div>
<div class="t " style="left:1174.5px;top:157.18px;font-size:15px;line-height:17.25px;color:#4a4a4a;letter-spacing:0.050px;">Add-ins</div>
<div class="t " style="left:1000px;width:400px;text-align:center;top:180.84px;font-size:13.2px;line-height:15.18px;color:#666666;">Add-ins</div>
<div style="position:absolute;left:1233px;top:91px;width:1px;height:103px;background:#d9d9d9"></div>
<svg style="position:absolute;left:1289px;top:184px;" width="12" height="7" viewBox="0 0 12 7"><path d="M1 6 L6 1 L11 6" fill="none" stroke="#555" stroke-width="1.5"/></svg>
<div style="position:absolute;left:10px;top:211px;width:127px;height:30px;background:#fff;border:1px solid #c6c6c6"></div>
<div class="t " style="left:17px;top:218.18px;font-size:15px;line-height:17.25px;color:#4a4a4a;">H1</div>
<svg style="position:absolute;left:120px;top:224px;" width="8" height="5" viewBox="0 0 8 5"><path d="M0 0 H8 L4 4.5Z" fill="#777"/></svg>
<div style="position:absolute;left:154px;top:219px;width:3px;height:3px;background:#a0a0a0"></div>
<div style="position:absolute;left:154px;top:225px;width:3px;height:3px;background:#a0a0a0"></div>
<div style="position:absolute;left:154px;top:231px;width:3px;height:3px;background:#a0a0a0"></div>
<div style="position:absolute;left:174px;top:211px;width:137px;height:30px;background:#fff;border:1px solid #c6c6c6"></div>
<svg style="position:absolute;left:186px;top:217px;" width="70" height="20" viewBox="186 217 70 20"><path d="M189.5 220.8 L203.8 232.5 M203.8 220.8 L189.5 232.5" stroke="#c6c6c6" stroke-width="2.2"/><path d="M234.5 226.5 L241 233 L251 220.5" fill="none" stroke="#c6c6c6" stroke-width="2.8"/></svg>
<div class="t " style="left:277.5px;top:214.91px;font-size:18px;line-height:20.70px;color:#666;font-weight:bold;font-style:italic;font-family:Liberation Serif,serif;">f</div>
<div class="t " style="left:286px;top:219.10px;font-size:14px;line-height:16.10px;color:#666;font-weight:bold;font-style:italic;font-family:Liberation Serif,serif;">x</div>
<div style="position:absolute;left:314px;top:211px;width:991px;height:78px;background:#fff;border:1px solid #c6c6c6"></div>
<div class="t " style="left:328.5px;top:218.18px;font-size:15px;line-height:17.25px;color:#4a4a4a;letter-spacing:0.9px;">Profit</div>
<svg style="position:absolute;left:1290px;top:222px;" width="10" height="6" viewBox="0 0 10 6"><path d="M0.5 5.5 L5 1 L9.5 5.5" fill="none" stroke="#666" stroke-width="2"/></svg>
<div style="position:absolute;left:4px;top:302px;width:1281px;height:20px;background:#e6e6e6"></div>
<div style="position:absolute;left:4px;top:322px;width:33px;height:418px;background:#e6e6e6"></div>
<div style="position:absolute;left:38px;top:322px;width:1247px;height:418px;background:#fff"></div>
<svg style="position:absolute;left:29px;top:311px;" width="8" height="8" viewBox="0 0 8 8"><path d="M8 0 V8 H0Z" fill="#b9b9b9"/></svg>
<svg style="position:absolute;left:0;top:0" width="1316" height="796"><rect x="38" y="344" width="1247" height="1" fill="#dadada"/><rect x="38" y="366" width="1247" height="1" fill="#dadada"/><rect x="38" y="388" width="1247" height="1" fill="#dadada"/><rect x="38" y="410" width="1247" height="1" fill="#dadada"/><rect x="38" y="432" width="1247" height="1" fill="#dadada"/><rect x="38" y="454" width="1247" height="1" fill="#dadada"/><rect x="38" y="476" width="1247" height="1" fill="#dadada"/><rect x="38" y="498" width="1247" height="1" fill="#dadada"/><rect x="38" y="520" width="1247" height="1" fill="#dadada"/><rect x="38" y="542" width="1247" height="1" fill="#dadada"/><rect x="38" y="564" width="1247" height="1" fill="#dadada"/><rect x="38" y="586" width="1247" height="1" fill="#dadada"/><rect x="38" y="608" width="1247" height="1" fill="#dadada"/><rect x="38" y="630" width="1247" height="1" fill="#dadada"/><rect x="38" y="652" width="1247" height="1" fill="#dadada"/><rect x="38" y="674" width="1247" height="1" fill="#dadada"/><rect x="38" y="696" width="1247" height="1" fill="#dadada"/><rect x="38" y="718" width="1247" height="1" fill="#dadada"/><rect x="38" y="740" width="1247" height="1" fill="#dadada"/><rect x="104" y="322" width="1" height="418" fill="#dadada"/><rect x="176" y="322" width="1" height="418" fill="#dadada"/><rect x="267" y="322" width="1" height="418" fill="#dadada"/><rect x="509" y="322" width="1" height="418" fill="#dadada"/><rect x="586" y="322" width="1" height="418" fill="#dadada"/><rect x="667" y="322" width="1" height="418" fill="#dadada"/><rect x="725" y="322" width="1" height="418" fill="#dadada"/><rect x="779" y="322" width="1" height="418" fill="#dadada"/><rect x="1044" y="322" width="1" height="418" fill="#dadada"/><rect x="1092" y="322" width="1" height="418" fill="#dadada"/><rect x="1172" y="322" width="1" height="418" fill="#dadada"/><rect x="1252" y="322" width="1" height="418" fill="#dadada"/><rect x="1285" y="322" width="1" height="418" fill="#dadada"/></svg>
<svg style="position:absolute;left:0;top:0" width="1316" height="796"><rect x="37" y="301" width="1" height="21" fill="#bdbdbd"/><rect x="104" y="301" width="1" height="21" fill="#bdbdbd"/><rect x="176" y="301" width="1" height="21" fill="#bdbdbd"/><rect x="267" y="301" width="1" height="21" fill="#bdbdbd"/><rect x="509" y="301" width="1" height="21" fill="#bdbdbd"/><rect x="586" y="301" width="1" height="21" fill="#bdbdbd"/><rect x="667" y="301" width="1" height="21" fill="#bdbdbd"/><rect x="725" y="301" width="1" height="21" fill="#bdbdbd"/><rect x="779" y="301" width="1" height="21" fill="#bdbdbd"/><rect x="1044" y="301" width="1" height="21" fill="#bdbdbd"/><rect x="1092" y="301" width="1" height="21" fill="#bdbdbd"/><rect x="1172" y="301" width="1" height="21" fill="#bdbdbd"/><rect x="1252" y="301" width="1" height="21" fill="#bdbdbd"/><rect x="4" y="344" width="33" height="1" fill="#bdbdbd"/><rect x="4" y="366" width="33" height="1" fill="#bdbdbd"/><rect x="4" y="388" width="33" height="1" fill="#bdbdbd"/><rect x="4" y="410" width="33" height="1" fill="#bdbdbd"/><rect x="4" y="432" width="33" height="1" fill="#bdbdbd"/><rect x="4" y="454" width="33" height="1" fill="#bdbdbd"/><rect x="4" y="476" width="33" height="1" fill="#bdbdbd"/><rect x="4" y="498" width="33" height="1" fill="#bdbdbd"/><rect x="4" y="520" width="33" height="1" fill="#bdbdbd"/><rect x="4" y="542" width="33" height="1" fill="#bdbdbd"/><rect x="4" y="564" width="33" height="1" fill="#bdbdbd"/><rect x="4" y="586" width="33" height="1" fill="#bdbdbd"/><rect x="4" y="608" width="33" height="1" fill="#bdbdbd"/><rect x="4" y="630" width="33" height="1" fill="#bdbdbd"/><rect x="4" y="652" width="33" height="1" fill="#bdbdbd"/><rect x="4" y="674" width="33" height="1" fill="#bdbdbd"/><rect x="4" y="696" width="33" height="1" fill="#bdbdbd"/><rect x="4" y="718" width="33" height="1" fill="#bdbdbd"/><rect x="4" y="740" width="33" height="1" fill="#bdbdbd"/><rect x="4" y="322" width="1281" height="1" fill="#9b9b9b"/><rect x="37" y="302" width="1" height="438" fill="#9b9b9b"/><rect x="4" y="344" width="1281" height="1" fill="#9b9b9b"/><rect x="1285" y="322" width="1" height="418" fill="#9b9b9b"/></svg>
<div class="t " style="left:-129.0px;width:400px;text-align:center;top:303.76px;font-size:16px;line-height:18.40px;color:#222;">A</div>
<div class="t " style="left:-59.5px;width:400px;text-align:center;top:303.76px;font-size:16px;line-height:18.40px;color:#222;">B</div>
<div class="t " style="left:22.0px;width:400px;text-align:center;top:303.76px;font-size:16px;line-height:18.40px;color:#222;">C</div>
<div class="t " style="left:188.5px;width:400px;text-align:center;top:303.76px;font-size:16px;line-height:18.40px;color:#222;">D</div>
<div class="t " style="left:348.0px;width:400px;text-align:center;top:303.76px;font-size:16px;line-height:18.40px;color:#222;">E</div>
<div class="t " style="left:427.0px;width:400px;text-align:center;top:303.76px;font-size:16px;line-height:18.40px;color:#222;">F</div>
<div class="t " style="left:496.5px;width:400px;text-align:center;top:303.76px;font-size:16px;line-height:18.40px;color:#222;">G</div>
<div class="t " style="left:552.5px;width:400px;text-align:center;top:303.76px;font-size:16px;line-height:18.40px;color:#222;">H</div>
<div class="t " style="left:712.0px;width:400px;text-align:center;top:303.76px;font-size:16px;line-height:18.40px;color:#222;">I</div>
<div class="t " style="left:868.5px;width:400px;text-align:center;top:303.76px;font-size:16px;line-height:18.40px;color:#222;">J</div>
<div class="t " style="left:932.5px;width:400px;text-align:center;top:303.76px;font-size:16px;line-height:18.40px;color:#222;">K</div>
<div class="t " style="left:1012.5px;width:400px;text-align:center;top:303.76px;font-size:16px;line-height:18.40px;color:#222;">L</div>
<div class="t " style="left:-179.5px;width:400px;text-align:center;top:325.26px;font-size:16px;line-height:18.40px;color:#222;">1</div>
<div class="t " style="left:-179.5px;width:400px;text-align:center;top:347.26px;font-size:16px;line-height:18.40px;color:#222;">2</div>
<div class="t " style="left:-179.5px;width:400px;text-align:center;top:369.26px;font-size:16px;line-height:18.40px;color:#222;">3</div>
<div class="t " style="left:-179.5px;width:400px;text-align:center;top:391.26px;font-size:16px;line-height:18.40px;color:#222;">4</div>
<div class="t " style="left:-179.5px;width:400px;text-align:center;top:413.26px;font-size:16px;line-height:18.40px;color:#222;">5</div>
<div class="t " style="left:-179.5px;width:400px;text-align:center;top:435.26px;font-size:16px;line-height:18.40px;color:#222;">6</div>
<div class="t " style="left:-179.5px;width:400px;text-align:center;top:457.26px;font-size:16px;line-height:18.40px;color:#222;">7</div>
<div class="t " style="left:-179.5px;width:400px;text-align:center;top:479.26px;font-size:16px;line-height:18.40px;color:#222;">8</div>
<div class="t " style="left:-179.5px;width:400px;text-align:center;top:501.26px;font-size:16px;line-height:18.40px;color:#222;">9</div>
<div class="t " style="left:-179.5px;width:400px;text-align:center;top:523.26px;font-size:16px;line-height:18.40px;color:#222;">10</div>
<div class="t " style="left:-179.5px;width:400px;text-align:center;top:545.26px;font-size:16px;line-height:18.40px;color:#222;">11</div>
<div class="t " style="left:-179.5px;width:400px;text-align:center;top:567.26px;font-size:16px;line-height:18.40px;color:#222;">12</div>
<div class="t " style="left:-179.5px;width:400px;text-align:center;top:589.26px;font-size:16px;line-height:18.40px;color:#222;">13</div>
<div class="t " style="left:-179.5px;width:400px;text-align:center;top:611.26px;font-size:16px;line-height:18.40px;color:#222;">14</div>
<div class="t " style="left:-179.5px;width:400px;text-align:center;top:633.26px;font-size:16px;line-height:18.40px;color:#222;">15</div>
<div class="t " style="left:-179.5px;width:400px;text-align:center;top:655.26px;font-size:16px;line-height:18.40px;color:#222;">16</div>
<div class="t " style="left:-179.5px;width:400px;text-align:center;top:677.26px;font-size:16px;line-height:18.40px;color:#222;">17</div>
<div class="t " style="left:-179.5px;width:400px;text-align:center;top:699.26px;font-size:16px;line-height:18.40px;color:#222;">18</div>
<div class="t " style="left:-179.5px;width:400px;text-align:center;top:721.26px;font-size:16px;line-height:18.40px;color:#222;">19</div>
<div class="t " style="left:41px;top:324.89px;font-size:16.4px;line-height:18.86px;color:#000;font-weight:bold;">Region</div>
<div class="t " style="left:108px;top:324.89px;font-size:16.4px;line-height:18.86px;color:#000;font-weight:bold;">Product</div>
<div class="t " style="left:180px;top:324.89px;font-size:16.4px;line-height:18.86px;color:#000;font-weight:bold;">Date</div>
<div class="t " style="left:271px;top:324.89px;font-size:16.4px;line-height:18.86px;color:#000;font-weight:bold;">Customer</div>
<div class="t " style="right:733.4px;top:324.89px;font-size:16.4px;line-height:18.86px;color:#000;font-weight:bold;">Quantity</div>
<div class="t " style="right:652.4px;top:324.89px;font-size:16.4px;line-height:18.86px;color:#000;font-weight:bold;">Revenue</div>
<div class="t " style="right:594.4px;top:324.89px;font-size:16.4px;line-height:18.86px;color:#000;font-weight:bold;">COGS</div>
<div class="t " style="right:540.4px;top:324.89px;font-size:16.4px;line-height:18.86px;color:#000;font-weight:bold;">Profit</div>
<div class="t " style="left:41px;top:346.89px;font-size:16.4px;line-height:18.86px;color:#000;">South</div>
<div class="t " style="left:108px;top:346.89px;font-size:16.4px;line-height:18.86px;color:#000;">F495</div>
<div class="t " style="right:1052.4px;top:346.89px;font-size:16.4px;line-height:18.86px;color:#000;">2-Jan-07</div>
<div class="t " style="left:271px;top:346.89px;font-size:16.4px;line-height:18.86px;color:#000;">Secure Yardstick Corp.</div>
<div class="t " style="right:733.4px;top:346.89px;font-size:16.4px;line-height:18.86px;color:#000;">440</div>
<div class="t " style="right:652.4px;top:346.89px;font-size:16.4px;line-height:18.86px;color:#000;">9482</div>
<div class="t " style="right:594.4px;top:346.89px;font-size:16.4px;line-height:18.86px;color:#000;">4497</div>
<div class="t " style="right:540.4px;top:346.89px;font-size:16.4px;line-height:18.86px;color:#000;">4985</div>
<div class="t " style="left:41px;top:368.89px;font-size:16.4px;line-height:18.86px;color:#000;">South</div>
<div class="t " style="left:108px;top:368.89px;font-size:16.4px;line-height:18.86px;color:#000;">D776</div>
<div class="t " style="right:1052.4px;top:368.89px;font-size:16.4px;line-height:18.86px;color:#000;">2-Jan-07</div>
<div class="t " style="left:271px;top:368.89px;font-size:16.4px;line-height:18.86px;color:#000;">Trustworthy Barometer Co.</div>
<div class="t " style="right:733.4px;top:368.89px;font-size:16.4px;line-height:18.86px;color:#000;">140</div>
<div class="t " style="right:652.4px;top:368.89px;font-size:16.4px;line-height:18.86px;color:#000;">2628</div>
<div class="t " style="right:594.4px;top:368.89px;font-size:16.4px;line-height:18.86px;color:#000;">1186</div>
<div class="t " style="right:540.4px;top:368.89px;font-size:16.4px;line-height:18.86px;color:#000;">1442</div>
<div class="t " style="left:41px;top:390.89px;font-size:16.4px;line-height:18.86px;color:#000;">North</div>
<div class="t " style="left:108px;top:390.89px;font-size:16.4px;line-height:18.86px;color:#000;">B713</div>
<div class="t " style="right:1052.4px;top:390.89px;font-size:16.4px;line-height:18.86px;color:#000;">2-Jan-07</div>
<div class="t " style="left:271px;top:390.89px;font-size:16.4px;line-height:18.86px;color:#000;">Rare Sandal Traders</div>
<div class="t " style="right:733.4px;top:390.89px;font-size:16.4px;line-height:18.86px;color:#000;">90</div>
<div class="t " style="right:652.4px;top:390.89px;font-size:16.4px;line-height:18.86px;color:#000;">1761</div>
<div class="t " style="right:594.4px;top:390.89px;font-size:16.4px;line-height:18.86px;color:#000;">762</div>
<div class="t " style="right:540.4px;top:390.89px;font-size:16.4px;line-height:18.86px;color:#000;">999</div>
<div class="t " style="left:41px;top:412.89px;font-size:16.4px;line-height:18.86px;color:#000;">North</div>
<div class="t " style="left:108px;top:412.89px;font-size:16.4px;line-height:18.86px;color:#000;">D173</div>
<div class="t " style="right:1052.4px;top:412.89px;font-size:16.4px;line-height:18.86px;color:#000;">3-Jan-07</div>
<div class="t " style="left:271px;top:412.89px;font-size:16.4px;line-height:18.86px;color:#000;">Trustworthy Barometer Co.</div>
<div class="t " style="right:733.4px;top:412.89px;font-size:16.4px;line-height:18.86px;color:#000;">800</div>
<div class="t " style="right:652.4px;top:412.89px;font-size:16.4px;line-height:18.86px;color:#000;">14408</div>
<div class="t " style="right:594.4px;top:412.89px;font-size:16.4px;line-height:18.86px;color:#000;">6776</div>
<div class="t " style="right:540.4px;top:412.89px;font-size:16.4px;line-height:18.86px;color:#000;">7632</div>
<div class="t " style="left:41px;top:434.89px;font-size:16.4px;line-height:18.86px;color:#000;">Central</div>
<div class="t " style="left:108px;top:434.89px;font-size:16.4px;line-height:18.86px;color:#000;">A354</div>
<div class="t " style="right:1052.4px;top:434.89px;font-size:16.4px;line-height:18.86px;color:#000;">4-Jan-07</div>
<div class="t " style="left:271px;top:434.89px;font-size:16.4px;line-height:18.86px;color:#000;">Rare Sandal Traders</div>
<div class="t " style="right:733.4px;top:434.89px;font-size:16.4px;line-height:18.86px;color:#000;">260</div>
<div class="t " style="right:652.4px;top:434.89px;font-size:16.4px;line-height:18.86px;color:#000;">6373</div>
<div class="t " style="right:594.4px;top:434.89px;font-size:16.4px;line-height:18.86px;color:#000;">2657</div>
<div class="t " style="right:540.4px;top:434.89px;font-size:16.4px;line-height:18.86px;color:#000;">3716</div>
<div class="t " style="left:41px;top:456.89px;font-size:16.4px;line-height:18.86px;color:#000;">Central</div>
<div class="t " style="left:108px;top:456.89px;font-size:16.4px;line-height:18.86px;color:#000;">D850</div>
<div class="t " style="right:1052.4px;top:456.89px;font-size:16.4px;line-height:18.86px;color:#000;">4-Jan-07</div>
<div class="t " style="left:271px;top:456.89px;font-size:16.4px;line-height:18.86px;color:#000;">Steadfast Linen Partners</div>
<div class="t " style="right:733.4px;top:456.89px;font-size:16.4px;line-height:18.86px;color:#000;">280</div>
<div class="t " style="right:652.4px;top:456.89px;font-size:16.4px;line-height:18.86px;color:#000;">6762</div>
<div class="t " style="right:594.4px;top:456.89px;font-size:16.4px;line-height:18.86px;color:#000;">2862</div>
<div class="t " style="right:540.4px;top:456.89px;font-size:16.4px;line-height:18.86px;color:#000;">3900</div>
<div class="t " style="left:41px;top:478.89px;font-size:16.4px;line-height:18.86px;color:#000;">South</div>
<div class="t " style="left:108px;top:478.89px;font-size:16.4px;line-height:18.86px;color:#000;">D776</div>
<div class="t " style="right:1052.4px;top:478.89px;font-size:16.4px;line-height:18.86px;color:#000;">4-Jan-07</div>
<div class="t " style="left:271px;top:478.89px;font-size:16.4px;line-height:18.86px;color:#000;">Fresh Wax Co.</div>
<div class="t " style="right:733.4px;top:478.89px;font-size:16.4px;line-height:18.86px;color:#000;">660</div>
<div class="t " style="right:652.4px;top:478.89px;font-size:16.4px;line-height:18.86px;color:#000;">14619</div>
<div class="t " style="right:594.4px;top:478.89px;font-size:16.4px;line-height:18.86px;color:#000;">6745</div>
<div class="t " style="right:540.4px;top:478.89px;font-size:16.4px;line-height:18.86px;color:#000;">7874</div>
<div class="t " style="left:41px;top:500.89px;font-size:16.4px;line-height:18.86px;color:#000;">North</div>
<div class="t " style="left:108px;top:500.89px;font-size:16.4px;line-height:18.86px;color:#000;">D173</div>
<div class="t " style="right:1052.4px;top:500.89px;font-size:16.4px;line-height:18.86px;color:#000;">4-Jan-07</div>
<div class="t " style="left:271px;top:500.89px;font-size:16.4px;line-height:18.86px;color:#000;">Real Sandal Partners</div>
<div class="t " style="right:733.4px;top:500.89px;font-size:16.4px;line-height:18.86px;color:#000;">1500</div>
<div class="t " style="right:652.4px;top:500.89px;font-size:16.4px;line-height:18.86px;color:#000;">27435</div>
<div class="t " style="right:594.4px;top:500.89px;font-size:16.4px;line-height:18.86px;color:#000;">12705</div>
<div class="t " style="right:540.4px;top:500.89px;font-size:16.4px;line-height:18.86px;color:#000;">14730</div>
<div class="t " style="left:41px;top:522.89px;font-size:16.4px;line-height:18.86px;color:#000;">Central</div>
<div class="t " style="left:108px;top:522.89px;font-size:16.4px;line-height:18.86px;color:#000;">B713</div>
<div class="t " style="right:1052.4px;top:522.89px;font-size:16.4px;line-height:18.86px;color:#000;">5-Jan-07</div>
<div class="t " style="left:271px;top:522.89px;font-size:16.4px;line-height:18.86px;color:#000;">Cool Necktie Supply</div>
<div class="t " style="right:733.4px;top:522.89px;font-size:16.4px;line-height:18.86px;color:#000;">360</div>
<div class="t " style="right:652.4px;top:522.89px;font-size:16.4px;line-height:18.86px;color:#000;">8694</div>
<div class="t " style="right:594.4px;top:522.89px;font-size:16.4px;line-height:18.86px;color:#000;">3542</div>
<div class="t " style="right:540.4px;top:522.89px;font-size:16.4px;line-height:18.86px;color:#000;">5152</div>
<div class="t " style="left:41px;top:544.89px;font-size:16.4px;line-height:18.86px;color:#000;">Central</div>
<div class="t " style="left:108px;top:544.89px;font-size:16.4px;line-height:18.86px;color:#000;">F495</div>
<div class="t " style="right:1052.4px;top:544.89px;font-size:16.4px;line-height:18.86px;color:#000;">5-Jan-07</div>
<div class="t " style="left:271px;top:544.89px;font-size:16.4px;line-height:18.86px;color:#000;">Cool Necktie Supply</div>
<div class="t " style="right:733.4px;top:544.89px;font-size:16.4px;line-height:18.86px;color:#000;">350</div>
<div class="t " style="right:652.4px;top:544.89px;font-size:16.4px;line-height:18.86px;color:#000;">6100</div>
<div class="t " style="right:594.4px;top:544.89px;font-size:16.4px;line-height:18.86px;color:#000;">2964</div>
<div class="t " style="right:540.4px;top:544.89px;font-size:16.4px;line-height:18.86px;color:#000;">3136</div>
<div class="t " style="left:41px;top:566.89px;font-size:16.4px;line-height:18.86px;color:#000;">Central</div>
<div class="t " style="left:108px;top:566.89px;font-size:16.4px;line-height:18.86px;color:#000;">D157</div>
<div class="t " style="right:1052.4px;top:566.89px;font-size:16.4px;line-height:18.86px;color:#000;">8-Jan-07</div>
<div class="t " style="left:271px;top:566.89px;font-size:16.4px;line-height:18.86px;color:#000;">Rare Sandal Traders</div>
<div class="t " style="right:733.4px;top:566.89px;font-size:16.4px;line-height:18.86px;color:#000;">50</div>
<div class="t " style="right:652.4px;top:566.89px;font-size:16.4px;line-height:18.86px;color:#000;">984</div>
<div class="t " style="right:594.4px;top:566.89px;font-size:16.4px;line-height:18.86px;color:#000;">423</div>
<div class="t " style="right:540.4px;top:566.89px;font-size:16.4px;line-height:18.86px;color:#000;">561</div>
<div class="t " style="left:41px;top:588.89px;font-size:16.4px;line-height:18.86px;color:#000;">North</div>
<div class="t " style="left:108px;top:588.89px;font-size:16.4px;line-height:18.86px;color:#000;">D850</div>
<div class="t " style="right:1052.4px;top:588.89px;font-size:16.4px;line-height:18.86px;color:#000;">8-Jan-07</div>
<div class="t " style="left:271px;top:588.89px;font-size:16.4px;line-height:18.86px;color:#000;">Trustworthy Barometer Co.</div>
<div class="t " style="right:733.4px;top:588.89px;font-size:16.4px;line-height:18.86px;color:#000;">640</div>
<div class="t " style="right:652.4px;top:588.89px;font-size:16.4px;line-height:18.86px;color:#000;">13485</div>
<div class="t " style="right:594.4px;top:588.89px;font-size:16.4px;line-height:18.86px;color:#000;">5421</div>
<div class="t " style="right:540.4px;top:588.89px;font-size:16.4px;line-height:18.86px;color:#000;">8064</div>
<div class="t " style="left:41px;top:610.89px;font-size:16.4px;line-height:18.86px;color:#000;">North</div>
<div class="t " style="left:108px;top:610.89px;font-size:16.4px;line-height:18.86px;color:#000;">D173</div>
<div class="t " style="right:1052.4px;top:610.89px;font-size:16.4px;line-height:18.86px;color:#000;">9-Jan-07</div>
<div class="t " style="left:271px;top:610.89px;font-size:16.4px;line-height:18.86px;color:#000;">Functional Jewelry Corp.</div>
<div class="t " style="right:733.4px;top:610.89px;font-size:16.4px;line-height:18.86px;color:#000;">660</div>
<div class="t " style="right:652.4px;top:610.89px;font-size:16.4px;line-height:18.86px;color:#000;">15101</div>
<div class="t " style="right:594.4px;top:610.89px;font-size:16.4px;line-height:18.86px;color:#000;">6494</div>
<div class="t " style="right:540.4px;top:610.89px;font-size:16.4px;line-height:18.86px;color:#000;">8607</div>
<div class="t " style="left:41px;top:632.89px;font-size:16.4px;line-height:18.86px;color:#000;">Central</div>
<div class="t " style="left:108px;top:632.89px;font-size:16.4px;line-height:18.86px;color:#000;">A354</div>
<div class="t " style="right:1052.4px;top:632.89px;font-size:16.4px;line-height:18.86px;color:#000;">10-Jan-07</div>
<div class="t " style="left:271px;top:632.89px;font-size:16.4px;line-height:18.86px;color:#000;">Safe Hairpin Corp.</div>
<div class="t " style="right:733.4px;top:632.89px;font-size:16.4px;line-height:18.86px;color:#000;">500</div>
<div class="t " style="right:652.4px;top:632.89px;font-size:16.4px;line-height:18.86px;color:#000;">10560</div>
<div class="t " style="right:594.4px;top:632.89px;font-size:16.4px;line-height:18.86px;color:#000;">4235</div>
<div class="t " style="right:540.4px;top:632.89px;font-size:16.4px;line-height:18.86px;color:#000;">6325</div>
<div class="t " style="left:41px;top:654.89px;font-size:16.4px;line-height:18.86px;color:#000;">Central</div>
<div class="t " style="left:108px;top:654.89px;font-size:16.4px;line-height:18.86px;color:#000;">F495</div>
<div class="t " style="right:1052.4px;top:654.89px;font-size:16.4px;line-height:18.86px;color:#000;">10-Jan-07</div>
<div class="t " style="left:271px;top:654.89px;font-size:16.4px;line-height:18.86px;color:#000;">Functional Jewelry Corp.</div>
<div class="t " style="right:733.4px;top:654.89px;font-size:16.4px;line-height:18.86px;color:#000;">420</div>
<div class="t " style="right:652.4px;top:654.89px;font-size:16.4px;line-height:18.86px;color:#000;">9576</div>
<div class="t " style="right:594.4px;top:654.89px;font-size:16.4px;line-height:18.86px;color:#000;">4292</div>
<div class="t " style="right:540.4px;top:654.89px;font-size:16.4px;line-height:18.86px;color:#000;">5284</div>
<div class="t " style="left:41px;top:676.89px;font-size:16.4px;line-height:18.86px;color:#000;">Central</div>
<div class="t " style="left:108px;top:676.89px;font-size:16.4px;line-height:18.86px;color:#000;">D157</div>
<div class="t " style="right:1052.4px;top:676.89px;font-size:16.4px;line-height:18.86px;color:#000;">11-Jan-07</div>
<div class="t " style="left:271px;top:676.89px;font-size:16.4px;line-height:18.86px;color:#000;">Exclusive Instrument Corp.</div>
<div class="t " style="right:733.4px;top:676.89px;font-size:16.4px;line-height:18.86px;color:#000;">120</div>
<div class="t " style="right:652.4px;top:676.89px;font-size:16.4px;line-height:18.86px;color:#000;">2414</div>
<div class="t " style="right:594.4px;top:676.89px;font-size:16.4px;line-height:18.86px;color:#000;">1016</div>
<div class="t " style="right:540.4px;top:676.89px;font-size:16.4px;line-height:18.86px;color:#000;">1398</div>
<div class="t " style="left:41px;top:698.89px;font-size:16.4px;line-height:18.86px;color:#000;">South</div>
<div class="t " style="left:108px;top:698.89px;font-size:16.4px;line-height:18.86px;color:#000;">F474</div>
<div class="t " style="right:1052.4px;top:698.89px;font-size:16.4px;line-height:18.86px;color:#000;">11-Jan-07</div>
<div class="t " style="left:271px;top:698.89px;font-size:16.4px;line-height:18.86px;color:#000;">Steadfast Patio Inc.</div>
<div class="t " style="right:733.4px;top:698.89px;font-size:16.4px;line-height:18.86px;color:#000;">210</div>
<div class="t " style="right:652.4px;top:698.89px;font-size:16.4px;line-height:18.86px;color:#000;">3820</div>
<div class="t " style="right:594.4px;top:698.89px;font-size:16.4px;line-height:18.86px;color:#000;">1779</div>
<div class="t " style="right:540.4px;top:698.89px;font-size:16.4px;line-height:18.86px;color:#000;">2041</div>
<div class="t " style="left:41px;top:720.89px;font-size:16.4px;line-height:18.86px;color:#000;">North</div>
<div class="t " style="left:108px;top:720.89px;font-size:16.4px;line-height:18.86px;color:#000;">F474</div>
<div class="t " style="right:1052.4px;top:720.89px;font-size:16.4px;line-height:18.86px;color:#000;">11-Jan-07</div>
<div class="t " style="left:271px;top:720.89px;font-size:16.4px;line-height:18.86px;color:#000;">Trustworthy Barometer Co.</div>
<div class="t " style="right:733.4px;top:720.89px;font-size:16.4px;line-height:18.86px;color:#000;">560</div>
<div class="t " style="right:652.4px;top:720.89px;font-size:16.4px;line-height:18.86px;color:#000;">10853</div>
<div class="t " style="right:594.4px;top:720.89px;font-size:16.4px;line-height:18.86px;color:#000;">4743</div>
<div class="t " style="right:540.4px;top:720.89px;font-size:16.4px;line-height:18.86px;color:#000;">6110</div>
<div style="position:absolute;left:1286px;top:302px;width:25px;height:438px;background:#e6e6e6"></div>
<div style="position:absolute;left:1289px;top:322px;width:19px;height:419px;background:#dadada"></div>
<div style="position:absolute;left:1289px;top:303px;width:19px;height:19px;background:#fff;border:1px solid #c6c6c6"></div>
<svg style="position:absolute;left:1294px;top:310px;" width="9" height="5" viewBox="0 0 9 5"><path d="M0 5 L4.5 0 L9 5Z" fill="#707070"/></svg>
<div style="position:absolute;left:1289px;top:322px;width:19px;height:21px;background:#fff;border:1px solid #b9b9b9"></div>
<div style="position:absolute;left:1289px;top:722px;width:19px;height:19px;background:#fff;border:1px solid #c6c6c6"></div>
<svg style="position:absolute;left:1294px;top:729px;" width="9" height="5" viewBox="0 0 9 5"><path d="M0 0 L4.5 5 L9 0Z" fill="#707070"/></svg>
<div style="position:absolute;left:4px;top:741px;width:1307px;height:29px;background:#e6e6e6"></div>
<div style="position:absolute;left:4px;top:740px;width:1282px;height:2px;background:#a6a6a6"></div>
<svg style="position:absolute;left:32px;top:750.5px;" width="6" height="10" viewBox="0 0 6 10"><path d="M5 0 L0 4.7 L5 9.4Z" fill="#c3c3c3"/></svg>
<svg style="position:absolute;left:61px;top:750.5px;" width="6" height="10" viewBox="0 0 6 10"><path d="M0 0 L5 4.7 L0 9.4Z" fill="#c3c3c3"/></svg>
<div style="position:absolute;left:107px;top:742px;width:66px;height:23px;background:#fff;border-left:1px solid #c6c6c6;border-right:1px solid #c6c6c6"></div>
<div style="position:absolute;left:107px;top:765px;width:66px;height:2px;background:#217346"></div>
<div class="t " style="left:119.7px;top:743.44px;font-size:15.8px;line-height:18.17px;color:#217346;font-weight:bold;letter-spacing:0.425px;">Pivot</div>
<div class="t " style="left:184.5px;top:744.06px;font-size:16px;line-height:18.40px;color:#505050;">Goal</div>
<div style="position:absolute;left:231px;top:745px;width:1px;height:20px;background:#a8a8a8"></div>
<svg style="position:absolute;left:264px;top:745px;" width="22" height="22" viewBox="0 0 22 22"><circle cx="11" cy="11" r="9.8" fill="none" stroke="#777" stroke-width="1.2"/><path d="M11 5.5 V16.5 M5.5 11 H16.5" stroke="#707070" stroke-width="1.9"/></svg>
<div style="position:absolute;left:786px;top:749px;width:3px;height:3px;background:#a8a8a8"></div>
<div style="position:absolute;left:786px;top:754px;width:3px;height:3px;background:#a8a8a8"></div>
<div style="position:absolute;left:786px;top:759px;width:3px;height:3px;background:#a8a8a8"></div>
<div style="position:absolute;left:804px;top:746px;width:461px;height:19px;background:#dadada"></div>
<div style="position:absolute;left:804px;top:746px;width:19px;height:19px;background:#fff;border:1px solid #c6c6c6"></div>
<svg style="position:absolute;left:810px;top:751px;" width="6" height="9" viewBox="0 0 6 9"><path d="M5 0 L0 4.5 L5 9Z" fill="#707070"/></svg>
<div style="position:absolute;left:823px;top:746px;width:404px;height:19px;background:#fff;border:1px solid #a6a6a6"></div>
<div style="position:absolute;left:1266px;top:746px;width:19px;height:19px;background:#fff;border:1px solid #c6c6c6"></div>
<svg style="position:absolute;left:1273px;top:751px;" width="6" height="9" viewBox="0 0 6 9"><path d="M0 0 L5 4.5 L0 9Z" fill="#707070"/></svg>
<div style="position:absolute;left:4px;top:770px;width:1307px;height:26px;background:#f1f1f1"></div>
<div style="position:absolute;left:4px;top:770px;width:1307px;height:1px;background:#c2c2c2"></div>
<div class="t " style="left:11.7px;top:776.84px;font-size:13.2px;line-height:15.18px;color:#505050;letter-spacing:-0.800px;">Ready</div>
<svg style="position:absolute;left:66px;top:774px;" width="22" height="20" viewBox="66 774 22 20"><path d="M75 780.5 H83.5 V790.3 H70.6 V782" fill="none" stroke="#666" stroke-width="1.2"/><rect x="76.5" y="777" width="7.6" height="3.5" fill="#666"/><circle cx="72.3" cy="779.5" r="3.4" fill="#666"/><path d="M73 783.3 H82 M73 786 H82 M73 788.6 H82" stroke="#777" stroke-width="1" stroke-dasharray="2 1"/></svg>
<div style="position:absolute;left:955px;top:771px;width:42px;height:25px;background:#c6c6c6"></div>
<svg style="position:absolute;left:966px;top:774px;" width="20" height="20" viewBox="966 774 20 20"><rect x="968.5" y="776.5" width="15" height="14.5" fill="none" stroke="#666" stroke-width="1.2"/><path d="M968.5 781.4 H983.5 M968.5 786.2 H983.5 M973.5 776.5 V791 M978.5 776.5 V791" stroke="#666" stroke-width="1.2"/></svg>
<svg style="position:absolute;left:1006px;top:774px;" width="22" height="20" viewBox="1006 774 22 20"><rect x="1009.3" y="776.4" width="16.2" height="14" fill="none" stroke="#666" stroke-width="1"/><rect x="1012.5" y="779.5" width="9.5" height="8" fill="none" stroke="#666" stroke-width="1"/><path d="M1014.5 781.5 H1020 M1014.5 783.5 H1020 M1014.5 785.5 H1020" stroke="#666" stroke-width="0.9"/></svg>
<svg style="position:absolute;left:1048px;top:774px;" width="22" height="20" viewBox="1048 774 22 20"><rect x="1051.3" y="776.4" width="16.2" height="14.2" fill="none" stroke="#666" stroke-width="1"/><path d="M1051.3 784.5 H1062.5 V776.4 M1056.8 776.4 V784.5" fill="none" stroke="#666" stroke-width="1"/></svg>
<div style="position:absolute;left:1086px;top:782.5px;width:10px;height:2px;background:#555"></div>
<div style="position:absolute;left:1100px;top:783px;width:125px;height:1px;background:#999"></div>
<div style="position:absolute;left:1160px;top:777px;width:5px;height:14px;background:#666"></div>
<svg style="position:absolute;left:1227px;top:777px;" width="16" height="15" viewBox="1227 777 16 15"><path d="M1235.2 779 V789.6 M1229.5 784.3 H1241" stroke="#555" stroke-width="2"/></svg>
<div class="t " style="left:1257.9px;top:777.02px;font-size:13px;line-height:14.95px;color:#555;letter-spacing:-1.100px;">100%</div>
</body></html>
